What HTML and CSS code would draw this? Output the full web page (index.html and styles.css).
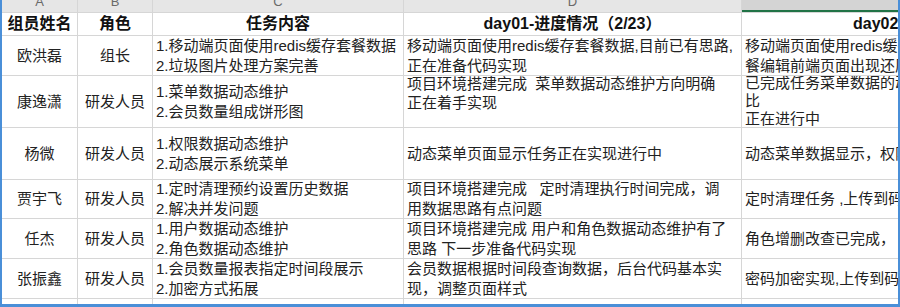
FILE: index.html
```html
<!DOCTYPE html>
<html lang="zh-CN">
<head>
<meta charset="utf-8">
<title>进度表</title>
<link rel="stylesheet" href="styles.css">
</head>
<body>
<div class="frame">
  <div class="sheet">
    <div class="colhead"><span>A</span></div>
    <div class="colhead"><span>B</span></div>
    <div class="colhead"><span>C</span></div>
    <div class="colhead"><span>D</span></div>
    <div class="colhead sel"><span></span></div>

    <div class="cell head center">组员姓名</div>
    <div class="cell head center">角色</div>
    <div class="cell head center">任务内容</div>
    <div class="cell head center">day01-进度情况（2/23）</div>
    <div class="cell head day2">day02-进度情况（2/24）</div>

    <div class="cell center">欧洪磊</div>
    <div class="cell center">组长</div>
    <div class="cell"><div>1.移动端页面使用redis缓存套餐数据<br>2.垃圾图片处理方案完善</div></div>
    <div class="cell"><div>移动端页面使用redis缓存套餐数据,目前已有思路,<br>正在准备代码实现</div></div>
    <div class="cell"><div>移动端页面使用redis缓存套<br>餐编辑前端页面出现还原</div></div>

    <div class="cell center">康逸潇</div>
    <div class="cell center">研发人员</div>
    <div class="cell"><div>1.菜单数据动态维护<br>2.会员数量组成饼形图</div></div>
    <div class="cell top"><div>项目环境搭建完成&nbsp;&nbsp;菜单数据动态维护方向明确<br>正在着手实现</div></div>
    <div class="cell top tight"><div>已完成任务菜单数据的动态<br>比<br>正在进行中</div></div>

    <div class="cell center">杨微</div>
    <div class="cell center">研发人员</div>
    <div class="cell"><div>1.权限数据动态维护<br>2.动态展示系统菜单</div></div>
    <div class="cell"><div>动态菜单页面显示任务正在实现进行中</div></div>
    <div class="cell"><div>动态菜单数据显示，权限数据维护</div></div>

    <div class="cell center">贾宇飞</div>
    <div class="cell center">研发人员</div>
    <div class="cell"><div>1.定时清理预约设置历史数据<br>2.解决并发问题</div></div>
    <div class="cell"><div>项目环境搭建完成&nbsp;&nbsp;&nbsp;定时清理执行时间完成，调<br>用数据思路有点问题</div></div>
    <div class="cell"><div>定时清理任务 ,上传到码云</div></div>

    <div class="cell center">任杰</div>
    <div class="cell center">研发人员</div>
    <div class="cell"><div>1.用户数据动态维护<br>2.角色数据动态维护</div></div>
    <div class="cell"><div>项目环境搭建完成 用户和角色数据动态维护有了<br>思路 下一步准备代码实现</div></div>
    <div class="cell"><div>角色增删改查已完成，</div></div>

    <div class="cell center">张振鑫</div>
    <div class="cell center">研发人员</div>
    <div class="cell"><div>1.会员数量报表指定时间段展示<br>2.加密方式拓展</div></div>
    <div class="cell"><div>会员数据根据时间段查询数据，后台代码基本实<br>现，调整页面样式</div></div>
    <div class="cell"><div>密码加密实现,上传到码云</div></div>

    <div class="cell"></div>
    <div class="cell"></div>
    <div class="cell"></div>
    <div class="cell"></div>
    <div class="cell"></div>
  </div>
</div>
</body>
</html>
```

FILE: styles.css
```css
html, body {
  margin: 0;
  padding: 0;
  background: #ffffff;
}

.frame {
  width: 900px;
  height: 307px;
  box-sizing: border-box;
  border-left: 2px solid #4a8fd8;
  border-right: 2px solid #4a8fd8;
  border-bottom: 3px solid #4a8fd8;
  overflow: hidden;
  background: #d6d6d6;
}

.sheet {
  display: grid;
  grid-template-columns: 75px 74px 250px 337px 1fr;
  grid-template-rows: 12px 22px 39px 51px 51px 38px 39px 39px 8px;
  gap: 1px;
  background: #d6d6d6;
  font-family: "Liberation Sans", "Noto Sans CJK SC", sans-serif;
}

.colhead {
  background: #e6e6e6;
  overflow: hidden;
  text-align: center;
  color: #6a6a6a;
  font-size: 13px;
}

.colhead span {
  display: block;
  line-height: 12px;
  margin-top: -4px;
}

.colhead.sel {
  background: #d4d4d4;
  box-sizing: border-box;
  border-bottom: 2px solid #217346;
}

.cell {
  background: #ffffff;
  display: flex;
  align-items: center;
  padding: 0 3px;
  overflow: hidden;
  white-space: nowrap;
  font-size: 15px;
  line-height: 20px;
  color: #222222;
}

.cell.center {
  justify-content: center;
}

.cell.top {
  align-items: flex-start;
  line-height: 19px;
}

.cell.top > div {
  margin-top: -2px;
}

.cell.tight {
  line-height: 18px;
}

.cell.head {
  font-weight: bold;
  font-size: 16px;
  color: #111111;
}

.cell.day2 {
  padding-left: 111px;
}
```
